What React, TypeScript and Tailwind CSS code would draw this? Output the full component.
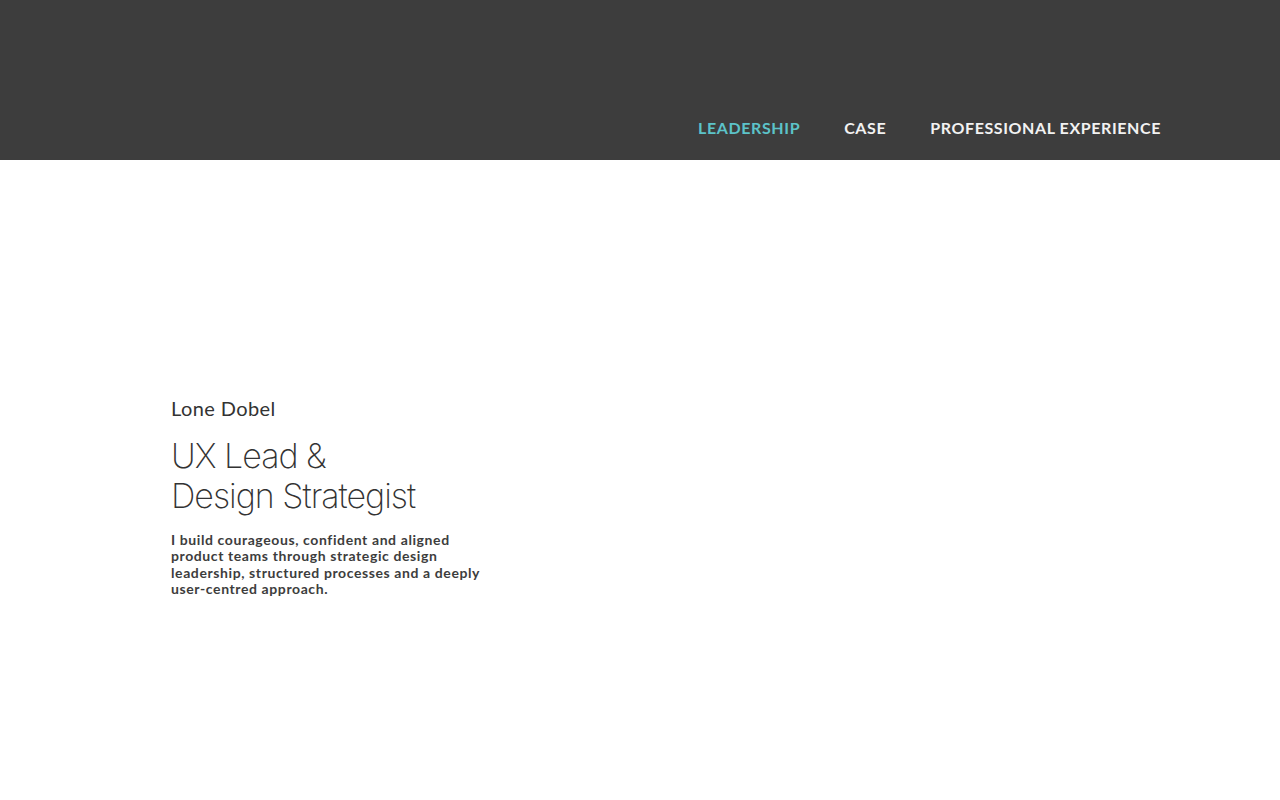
import React from "react";

const NAV = [
  { label: "LEADERSHIP", active: true },
  { label: "CASE", active: false },
  { label: "PROFESSIONAL EXPERIENCE", active: false },
];

export default function App() {
  return (
    <div className="min-h-screen bg-white" style={{ fontFamily: "Lato, 'Noto Sans', sans-serif" }}>
      <header className="h-[160px] bg-[#3d3d3d] flex items-end justify-end pr-[119px] pb-[21px]">
        <nav className="flex gap-[44px]">
          {NAV.map((item) => (
            <a
              key={item.label}
              href="#"
              className={`text-[16px] font-bold tracking-[0.6px] leading-[22px] ${
                item.active ? "text-[#5cc3c9]" : "text-[#f2f2f2]"
              }`}
            >
              {item.label}
            </a>
          ))}
        </nav>
      </header>
      <main className="pl-[171px] pt-[234px]">
        <div className="text-[20px] leading-[28px] tracking-[0.4px] text-[#333333]">Lone Dobel</div>
        <h1
          className="mt-[14px] text-[34px] leading-[40px] font-extralight tracking-[-1px] text-[#333333]"
          style={{ fontFamily: "Inter, Lato, sans-serif" }}
        >
          UX Lead &amp;
          <br />
          Design Strategist
        </h1>
        <p className="mt-[16px] w-[320px] text-[14px] leading-[16.3px] font-bold tracking-[0.6px] text-[#3d3d3d]">
          I build courageous, confident and aligned product teams through strategic design leadership, structured processes and a deeply user-centred approach.
        </p>
      </main>
    </div>
  );
}
